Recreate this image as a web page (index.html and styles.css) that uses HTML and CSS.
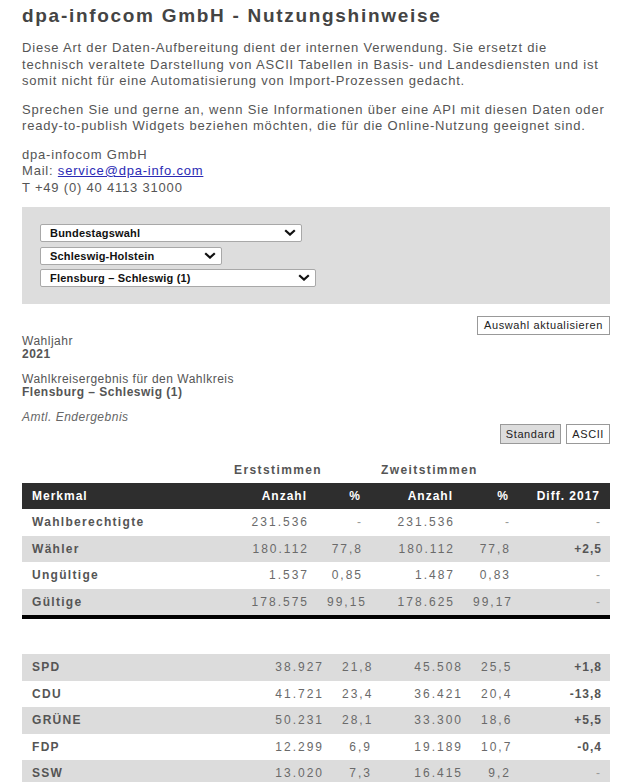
FILE: index.html
```html
<!DOCTYPE html>
<html lang="de">
<head>
<meta charset="utf-8">
<title>dpa-infocom GmbH - Nutzungshinweise</title>
<link rel="stylesheet" href="styles.css">
</head>
<body>
<div class="page">
  <h1 class="title">dpa-infocom GmbH - Nutzungshinweise</h1>
  <p class="text">Diese Art der Daten-Aufbereitung dient der internen Verwendung. Sie ersetzt die technisch veraltete Darstellung von ASCII Tabellen in Basis- und Landesdiensten und ist somit nicht für eine Automatisierung von Import-Prozessen gedacht.</p>
  <p class="text">Sprechen Sie und gerne an, wenn Sie Informationen über eine API mit diesen Daten oder ready-to-publish Widgets beziehen möchten, die für die Online-Nutzung geeignet sind.</p>
  <p class="text">dpa-infocom GmbH<br>Mail: <a class="mail" href="mailto:service@dpa-info.com">service@dpa-info.com</a><br>T +49 (0) 40 4113 31000</p>

  <div class="filter">
    <div class="sel sel-wide">
      <select><option>Bundestagswahl</option></select>
      <svg class="chev" viewBox="0 0 12 7" width="12" height="7"><path d="M1.2 1.2 L6 5.6 L10.8 1.2" fill="none" stroke="#111" stroke-width="2.2"/></svg>
    </div>
    <div class="sel sel-mid">
      <select><option>Schleswig-Holstein</option></select>
      <svg class="chev" viewBox="0 0 12 7" width="12" height="7"><path d="M1.2 1.2 L6 5.6 L10.8 1.2" fill="none" stroke="#111" stroke-width="2.2"/></svg>
    </div>
    <div class="sel sel-long">
      <select><option>Flensburg – Schleswig (1)</option></select>
      <svg class="chev" viewBox="0 0 12 7" width="12" height="7"><path d="M1.2 1.2 L6 5.6 L10.8 1.2" fill="none" stroke="#111" stroke-width="2.2"/></svg>
    </div>
  </div>

  <div class="actions update"><button class="btn">Auswahl aktualisieren</button></div>

  <div class="meta">
    <div class="meta-block">Wahljahr<br><b>2021</b></div>
    <div class="meta-block">Wahlkreisergebnis für den Wahlkreis<br><b>Flensburg – Schleswig (1)</b></div>
    <div class="meta-block status">Amtl. Endergebnis</div>
  </div>

  <div class="actions views"><button class="btn btn-active">Standard</button><button class="btn">ASCII</button></div>

  <table class="results summary">
    <colgroup><col class="c1"><col class="c2"><col class="c3"><col class="c4"><col class="c5"><col class="c6"></colgroup>
    <thead>
      <tr class="group"><th></th><th colspan="2">Erststimmen</th><th colspan="2">Zweitstimmen</th><th></th></tr>
      <tr class="head"><th class="lbl">Merkmal</th><th>Anzahl</th><th>%</th><th>Anzahl</th><th>%</th><th>Diff. 2017</th></tr>
    </thead>
    <tbody>
      <tr><td class="lbl">Wahlberechtigte</td><td>231.536</td><td class="na">-</td><td>231.536</td><td class="na">-</td><td class="na">-</td></tr>
      <tr class="alt"><td class="lbl">Wähler</td><td>180.112</td><td>77,8</td><td>180.112</td><td>77,8</td><td class="diff">+2,5</td></tr>
      <tr><td class="lbl">Ungültige</td><td>1.537</td><td>0,85</td><td>1.487</td><td>0,83</td><td class="na">-</td></tr>
      <tr class="alt last"><td class="lbl">Gültige</td><td>178.575</td><td>99,15</td><td>178.625</td><td>99,17</td><td class="na">-</td></tr>
    </tbody>
  </table>

  <table class="results parties">
    <colgroup><col class="p1"><col class="p2"><col class="p3"><col class="p4"><col class="p5"><col class="p6"></colgroup>
    <tbody>
      <tr class="alt"><td class="lbl">SPD</td><td>38.927</td><td>21,8</td><td>45.508</td><td>25,5</td><td class="diff">+1,8</td></tr>
      <tr><td class="lbl">CDU</td><td>41.721</td><td>23,4</td><td>36.421</td><td>20,4</td><td class="diff">-13,8</td></tr>
      <tr class="alt"><td class="lbl">GRÜNE</td><td>50.231</td><td>28,1</td><td>33.300</td><td>18,6</td><td class="diff">+5,5</td></tr>
      <tr><td class="lbl">FDP</td><td>12.299</td><td>6,9</td><td>19.189</td><td>10,7</td><td class="diff">-0,4</td></tr>
      <tr class="alt"><td class="lbl">SSW</td><td>13.020</td><td>7,3</td><td>16.415</td><td>9,2</td><td class="na">-</td></tr>
    </tbody>
  </table>
</div>
</body>
</html>
```
FILE: styles.css
```css
html, body {
  margin: 0;
  padding: 0;
  background: #fff;
}
body {
  font-family: "Liberation Sans", Arial, sans-serif;
  color: #555;
}
.page {
  width: 588px;
  padding: 0 24px 0 22px;
}
.title {
  margin: 0;
  padding-top: 4px;
  font-size: 19px;
  line-height: 24px;
  font-weight: bold;
  color: #444;
  letter-spacing: 1.7px;
}
.text {
  margin: 12px 0 0;
  font-size: 13px;
  line-height: 16.5px;
  letter-spacing: 0.8px;
}
.mail {
  color: #2b2bb5;
  text-decoration: underline;
}
.filter {
  margin-top: 11px;
  background: #ddd;
  padding: 16px 18px 18px;
  display: flex;
  flex-direction: column;
  align-items: flex-start;
  gap: 4.5px;
}
.sel {
  position: relative;
  height: 18px;
}
.sel select {
  appearance: none;
  -webkit-appearance: none;
  box-sizing: border-box;
  width: 100%;
  height: 18px;
  margin: 0;
  padding: 0 0 0 9px;
  border: 1px solid #a8a8a8;
  border-radius: 2px;
  background: #fff;
  font-family: "Liberation Sans", Arial, sans-serif;
  font-size: 11px;
  letter-spacing: 0.2px;
  color: #111;
  font-weight: bold;
}
.sel-wide { width: 262px; }
.sel-mid { width: 182px; }
.sel-long { width: 276px; }
.chev {
  position: absolute;
  right: 6px;
  top: 6px;
  pointer-events: none;
}
.actions {
  display: flex;
  justify-content: flex-end;
  gap: 5px;
}
.update {
  margin-top: 12px;
}
.btn {
  height: 19px;
  margin: 0;
  padding: 0 6px;
  border: 1px solid #999;
  background: #fff;
  font-family: "Liberation Sans", Arial, sans-serif;
  font-size: 11px;
  letter-spacing: 0.6px;
  color: #222;
  line-height: 17px;
}
.btn-active {
  background: #ddd;
}
.meta {
  font-size: 12px;
  line-height: 13px;
  letter-spacing: 0.5px;
}
.meta-block {
  margin-top: 12px;
}
.meta-block:first-child {
  margin-top: 0;
}
.status {
  font-style: italic;
  color: #666;
}
.views {
  margin-top: 0;
}
.views .btn {
  height: 20px;
  padding: 0 5px;
}
.results {
  width: 588px;
  border-collapse: collapse;
  table-layout: fixed;
  font-size: 12px;
  letter-spacing: 2px;
}
.summary {
  margin-top: 13px;
}
.results td, .results th {
  padding: 5px 10px;
  line-height: 16.5px;
  text-align: right;
  white-space: nowrap;
}
.results td, .results th {
  padding-right: 8px;
}
.results td {
  color: #6a6a6a;
}
.results .lbl {
  text-align: left;
  font-weight: bold;
  color: #555;
  letter-spacing: 1.3px;
}
.group th {
  text-align: left;
  color: #555;
  font-weight: bold;
  letter-spacing: 1.4px;
  padding-bottom: 4px;
}
.head th {
  background: #2e2e2e;
  color: #fff;
  font-weight: bold;
  letter-spacing: 1px;
  padding-right: 10px;
}
.head th.lbl { color: #fff; letter-spacing: 1px; }
.results tr.alt td {
  background: #dcdcdc;
}
.results tr.last td {
  border-bottom: 4px solid #000;
}
.results td.na {
  color: #999;
}
.results td.diff {
  font-weight: bold;
  color: #555;
  letter-spacing: 1px;
}
.c1 { width: 202px; }
.c2 { width: 93px; }
.c3 { width: 54px; }
.c4 { width: 92px; }
.c5 { width: 56px; }
.c6 { width: 91px; }
.parties {
  margin-top: 35px;
}
.p1 { width: 219px; }
.p2 { width: 91px; }
.p3 { width: 48px; }
.p4 { width: 91px; }
.p5 { width: 48px; }
.p6 { width: 91px; }
```
